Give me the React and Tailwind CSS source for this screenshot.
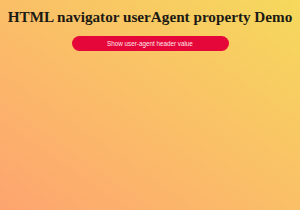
export default function App() {
  return (
    <div className="w-[300px] h-[210px] overflow-hidden bg-linear-to-tr from-[#fda46f] to-[#f5d95c] flex flex-col items-center">
      <h1 className="mt-[7px] text-[15.2px] leading-[20px] font-bold text-[#1c1a14] whitespace-nowrap font-['Liberation_Serif',serif]">
        HTML navigator userAgent property Demo
      </h1>
      <button className="mt-[9px] w-[157px] h-[15px] rounded-full bg-[#e6073a] text-[#fde8ea] text-[6.3px] flex items-center justify-center font-['Liberation_Sans',sans-serif]">
        Show user-agent header value
      </button>
    </div>
  );
}
